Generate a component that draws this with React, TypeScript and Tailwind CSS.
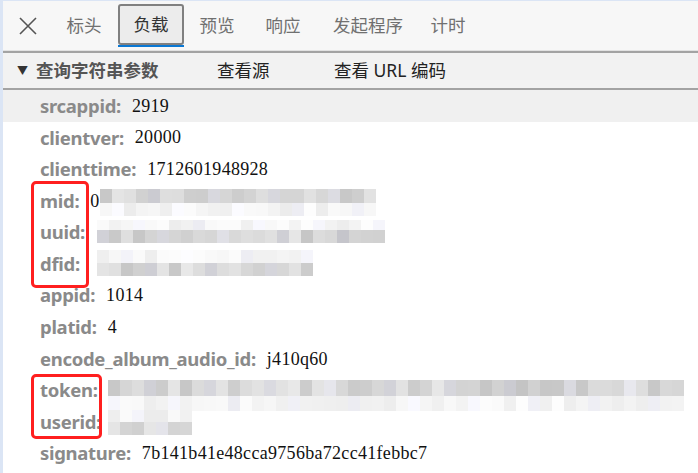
import React from "react";

const tabs = [
  { label: "标头", w: "w-[68px]" },
  { label: "负载", w: "w-[66px]", active: true },
  { label: "预览", w: "w-[66px]" },
  { label: "响应", w: "w-[66px]" },
  { label: "发起程序", w: "w-[104px]" },
  { label: "计时", w: "w-[56px]" },
];

type Blur = { x: number; y: number; cols: number; rows: { h: number; light: boolean }[] };

type Row = { k: string; v?: string; blur?: Blur; hi?: boolean };

const rows: Row[] = [
  { k: "srcappid", v: "2919", hi: true },
  { k: "clientver", v: "20000" },
  { k: "clienttime", v: "1712601948928" },
  { k: "mid", v: "0", blur: { x: 97, y: 4, cols: 23, rows: [{ h: 14, light: false }, { h: 13, light: true }] } },
  { k: "uuid", blur: { x: 94, y: 4, cols: 24, rows: [{ h: 10, light: true }, { h: 13, light: false }] } },
  { k: "dfid", blur: { x: 94, y: 2, cols: 18, rows: [{ h: 13, light: true }, { h: 13, light: false }] } },
  { k: "appid", v: "1014" },
  { k: "platid", v: "4" },
  { k: "encode_album_audio_id", v: "j410q60" },
  { k: "token", blur: { x: 105, y: 6, cols: 48, rows: [{ h: 16, light: false }, { h: 15, light: true }] } },
  { k: "userid", blur: { x: 105, y: 4, cols: 7, rows: [{ h: 12, light: true }, { h: 13, light: false }] } },
  { k: "signature", v: "7b141b41e48cca9756ba72cc41febbc7" },
];

function shade(seed: number, light: boolean) {
  const r = Math.abs(Math.sin(seed * 12.9898) * 43758.5453) % 1;
  const base = light ? 236 : 196;
  const span = light ? 17 : 36;
  const g = Math.round(base + r * span);
  return `rgb(${g},${g},${Math.min(255, g + (seed % 5 === 0 ? 6 : 0))})`;
}

function BlurBlock({ b, seed }: { b: Blur; seed: number }) {
  return (
    <div className="absolute flex flex-col" style={{ left: b.x, top: b.y }}>
      {b.rows.map((r, ri) => (
        <div key={ri} className="flex">
          {Array.from({ length: b.cols }).map((_, ci) => (
            <div
              key={ci}
              className="w-[12px]"
              style={{ height: r.h, background: shade(seed * 97 + ri * 31 + ci * 7 + 1, r.light) }}
            />
          ))}
        </div>
      ))}
    </div>
  );
}

export default function App() {
  return (
    <div className="relative w-[698px] h-[473px] overflow-hidden bg-white border-l-[3px] border-t border-[#dbe5f5] font-['Noto_Sans','Noto_Sans_CJK_SC',sans-serif]">
      <div className="h-[50px] bg-[#f7f7f7] border-b border-[#e2e2e2] flex items-center pl-[14px]">
        <svg width="22" height="22" viewBox="0 0 22 22" className="mr-[11px]">
          <path d="M3 3 L19 19 M19 3 L3 19" stroke="#555" strokeWidth="1.6" fill="none" />
        </svg>
        {tabs.map((t) => (
          <div
            key={t.label}
            className={
              t.active
                ? "relative h-[41px] mt-[-2px] w-[66px] flex items-center justify-center bg-[#ececec] border-2 border-[#808080] rounded-[3px] text-[17.5px] text-[#333]"
                : `h-[41px] ${t.w} flex items-center justify-center text-[17.5px] text-[#707070]`
            }
          >
            {t.label}
            {t.active && <div className="absolute left-[-2px] right-[-2px] bottom-[-4px] h-[2px] bg-[#0a78d4]" />}
          </div>
        ))}
      </div>
      <div className="h-[39px] bg-[#f2f2f2] border-t-2 border-b-2 border-[#a3a3a3] flex items-center pl-[14px]">
        <span className="text-[11px] text-[#333] mr-[8px] mt-[1px]">▼</span>
        <span className="text-[17.5px] font-bold text-[#555] w-[181px]">查询字符串参数</span>
        <span className="text-[17.5px] text-[#222] w-[117px]">查看源</span>
        <span className="text-[17.5px] text-[#222]">查看 URL 编码</span>
      </div>
      <div className="flex flex-col">
        {rows.map((r, i) => (
          <div
            key={r.k}
            className={`relative h-[31.6px] flex items-center pl-[37px] ${r.hi ? "bg-[#f0f0f0]" : ""}`}
          >
            <span className="text-[18.5px] font-bold text-[#8a8a8a] tracking-[-0.3px]">{r.k}:</span>
            {r.v && (
              <span className="ml-[11px] text-[18px] text-[#111] font-['Liberation_Serif',serif] mt-[1px] tracking-[0.3px]">{r.v}</span>
            )}
            {r.blur && <BlurBlock b={r.blur} seed={i} />}
          </div>
        ))}
      </div>
      <div className="absolute left-[28px] top-[180px] w-[58px] h-[107px] border-[3px] border-[#ff1f1f] rounded-[5px]" />
      <div className="absolute left-[28px] top-[373px] w-[71px] h-[65px] border-[3px] border-[#ff1f1f] rounded-[5px]" />
    </div>
  );
}
